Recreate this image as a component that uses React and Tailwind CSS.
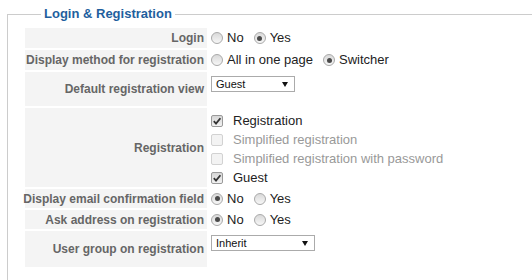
const Radio = ({ checked }) => (
  <span className="flex h-[12px] w-[12px] shrink-0 items-center justify-center rounded-full border border-[#a9a9a9] bg-gradient-to-b from-[#d9d9d9] to-[#f7f7f7]">
    {checked && <span className="h-[5px] w-[5px] rounded-full bg-[#4a4a4a]" />}
  </span>
);

const Check = ({ checked, disabled }) => (
  <span
    className={
      disabled
        ? "flex h-[12px] w-[12px] shrink-0 items-center justify-center rounded-[2px] border border-[#d2d2d2] bg-[#f3f3f3]"
        : "flex h-[12px] w-[12px] shrink-0 items-center justify-center rounded-[2px] border border-[#9a9a9a] bg-gradient-to-b from-[#d6d6d6] to-[#f2f2f2]"
    }
  >
    {checked && (
      <svg width="10" height="10" viewBox="0 0 10 10">
        <path d="M1.8 5.2 L4 7.6 L8.4 2.2" fill="none" stroke="#333" strokeWidth="1.8" />
      </svg>
    )}
  </span>
);

const Select = ({ value, width }) => (
  <div
    className="flex h-[16px] items-center justify-between border border-[#ababab] bg-white pl-[4px] pr-[6px] text-[11px] leading-none text-[#111]"
    style={{ width }}
  >
    <span>{value}</span>
    <svg width="6" height="5" viewBox="0 0 6 5">
      <path d="M0 0 H6 L3 5 Z" fill="#111" />
    </svg>
  </div>
);

const RadioGroup = ({ options, selected }) => (
  <div className="flex items-center text-[13px] text-[#222]">
    {options.map((o, i) => (
      <label key={o} className={i > 0 ? "ml-[10px] flex items-center gap-[4px]" : "flex items-center gap-[4px]"}>
        <Radio checked={i === selected} />
        <span>{o}</span>
      </label>
    ))}
  </div>
);

const Row = ({ label, height, top, children }) => (
  <div className="flex" style={{ height }}>
    <div className="flex w-[182px] shrink-0 items-center justify-end whitespace-nowrap bg-[#f4f4f4] pr-[3px] text-[12px] font-bold text-[#666]">
      {label}
    </div>
    <div className={top ? "flex flex-1 items-start pl-[4px] pt-[4px]" : "flex flex-1 items-center pl-[4px]"}>
      {children}
    </div>
  </div>
);

export default function App() {
  const regs = [
    { label: "Registration", checked: true },
    { label: "Simplified registration", disabled: true },
    { label: "Simplified registration with password", disabled: true },
    { label: "Guest", checked: true },
  ];

  return (
    <div className="h-[280px] w-[532px] overflow-hidden bg-white font-['Liberation_Sans',Arial,sans-serif]">
      <fieldset className="ml-[7px] mt-[6px] w-[540px] border border-[#cccccc] pl-[17px] pb-4">
        <legend className="ml-[16px] px-[3px] text-[13px] font-bold leading-4 text-[#1f5f9e]">
          Login &amp; Registration
        </legend>
        <div className="mt-[6px] flex flex-col gap-[2px]">
          <Row label="Login" height={20}>
            <RadioGroup options={["No", "Yes"]} selected={1} />
          </Row>
          <Row label="Display method for registration" height={20}>
            <RadioGroup options={["All in one page", "Switcher"]} selected={1} />
          </Row>
          <Row label="Default registration view" height={34} top>
            <Select value="Guest" width={84} />
          </Row>
          <Row label="Registration" height={79}>
            <div className="flex flex-col self-start pt-[3px] text-[13px]">
              {regs.map((r) => (
                <label key={r.label} className="flex h-[19px] items-center gap-[10px]">
                  <Check checked={r.checked} disabled={r.disabled} />
                  <span className={r.disabled ? "text-[#999]" : "text-[#222]"}>{r.label}</span>
                </label>
              ))}
            </div>
          </Row>
          <Row label="Display email confirmation field" height={19}>
            <RadioGroup options={["No", "Yes"]} selected={0} />
          </Row>
          <Row label="Ask address on registration" height={19}>
            <RadioGroup options={["No", "Yes"]} selected={0} />
          </Row>
          <Row label="User group on registration" height={36} top>
            <Select value="Inherit" width={104} />
          </Row>
        </div>
      </fieldset>
    </div>
  );
}
